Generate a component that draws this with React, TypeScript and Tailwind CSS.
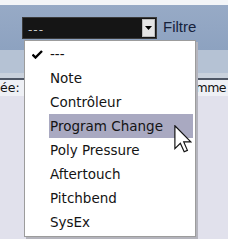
import React from 'react';

const items = ['---', 'Note', 'Contrôleur', 'Program Change', 'Poly Pressure', 'Aftertouch', 'Pitchbend', 'SysEx'];

const Cursor: React.FC = () => (
  <svg width="18" height="28" viewBox="0 0 12 19" className="absolute left-[174px] top-[125px]">
    <path
      d="M0.5 0.5 L0.5 16 L4.2 12.4 L6.8 18.2 L9 17.2 L6.5 11.5 L11.3 11.5 Z"
      fill="#ffffff"
      stroke="#111111"
      strokeWidth="0.8"
      strokeLinejoin="miter"
    />
  </svg>
);

const App: React.FC = () => {
  return (
    <div className="relative w-[228px] h-[239px] overflow-hidden bg-[#e1e1ec] font-['DejaVu_Sans',sans-serif]">
      <div className="h-[5px] bg-[#f3f5f8]" />
      <div className="h-[45px] bg-gradient-to-b from-[#97aac6] to-[#8da2c0] flex items-start pl-[22px] pt-[12px]">
        <div className="w-[135px] h-[22px] bg-[#151515] border border-[#3a3a3a] flex items-center justify-between pl-[5px] pr-[1px]">
          <span className="text-[#c8c8c8] text-[12px] leading-none tracking-[1px] mt-[4px]">---</span>
          <div className="w-[13px] h-[18px] bg-[#e4e4e4] border border-[#bdbdbd] flex items-center justify-center">
            <svg width="7" height="4" viewBox="0 0 7 4">
              <path d="M0 0 L7 0 L3.5 4 Z" fill="#000" />
            </svg>
          </div>
        </div>
        <span className="ml-[6px] mt-[2px] text-[15px] leading-none text-[#16223c] font-['Liberation_Sans',sans-serif]">Filtre</span>
      </div>
      <div className="h-[23px] bg-[#b5c2d4]" />
      <div className="h-[5px] bg-[#c9d1dc]" />
      <div className="h-[2px] bg-[#4f5766]" />
      <div className="h-[16px] bg-[#eef0f5] flex items-center justify-between text-[12.5px] text-[#111] pr-[2px]">
        <span className="whitespace-nowrap">ée:</span>
        <span className="whitespace-nowrap tracking-[-0.5px]">mme</span>
      </div>

      <div className="absolute left-[24px] top-[40px] w-[172px] h-[197px] bg-white border border-[#9c9c9c] shadow-[2px_2px_0_#b4b4bc] pt-px">
        {items.map((label, i) => (
          <div key={label} className="flex items-center h-[24px]">
            <div className="w-[24px] flex justify-center">
              {i === 0 && (
                <svg width="11" height="9" viewBox="0 0 11 9">
                  <path d="M0.5 4.5 L3.5 7.5 L10 1" fill="none" stroke="#000" strokeWidth="2.4" />
                </svg>
              )}
            </div>
            <div
              className={`flex-1 mr-[2px] h-[24px] flex items-center pl-[1px] text-[13.5px] text-[#141414] whitespace-nowrap ${
                i === 3 ? 'bg-[#a9a9c1]' : ''
              }`}
            >
              {label}
            </div>
          </div>
        ))}
      </div>

      <Cursor />
    </div>
  );
};

export default App;
